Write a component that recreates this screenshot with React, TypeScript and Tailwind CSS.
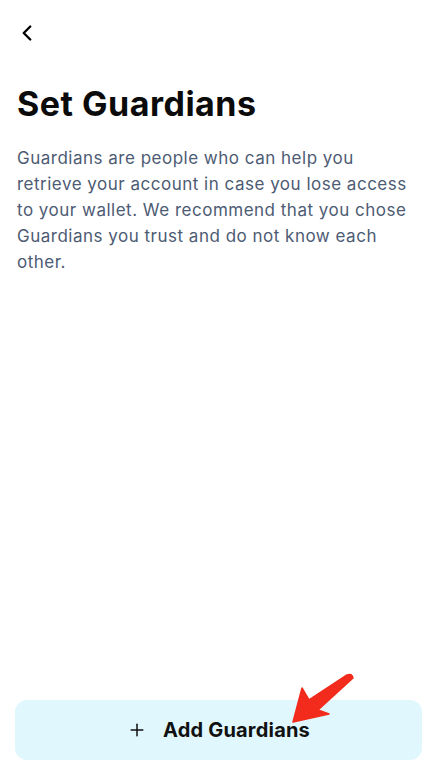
import { ChevronLeft, Plus } from 'lucide-react'

export default function App() {
  return (
    <div className="relative flex h-[782px] w-[437px] flex-col bg-white font-['Inter',sans-serif]">
      <div className="px-[14px] pt-[20px]">
        <ChevronLeft className="h-[26px] w-[26px] text-black" strokeWidth={2.2} />
      </div>
      <div className="pl-[17px] pr-[14px] pt-[38px]">
        <h1 className="text-[34px] font-bold leading-[40px] tracking-[0.5px] text-[#0b0b0b]">Set Guardians</h1>
        <p className="mt-[21px] text-[17px] leading-[26px] tracking-[0.5px] text-[#4d5b73]">
          Guardians are people who can help you retrieve your account in case you lose access to your wallet. We
          recommend that you chose Guardians you trust and do not know each other.
        </p>
      </div>
      <div className="mt-auto px-[15px] pb-[22px]">
        <button className="flex h-[60px] w-full items-center justify-center gap-[16px] rounded-[12px] bg-[#e0f8fd] text-[20px] font-bold tracking-[0.2px] text-[#111]">
          <Plus className="h-[20px] w-[20px]" strokeWidth={1.8} />
          Add Guardians
        </button>
      </div>
      <svg className="absolute left-[285px] top-[668px]" width="75" height="62" viewBox="0 0 75 62">
        <path
          d="M8 54 L17 20 L24 32 L62 7 Q67 5 68 10 L33 42 L44 46 Z"
          fill="#f22b1c"
          stroke="#f22b1c"
          strokeWidth="1.5"
          strokeLinejoin="round"
        />
      </svg>
    </div>
  )
}
